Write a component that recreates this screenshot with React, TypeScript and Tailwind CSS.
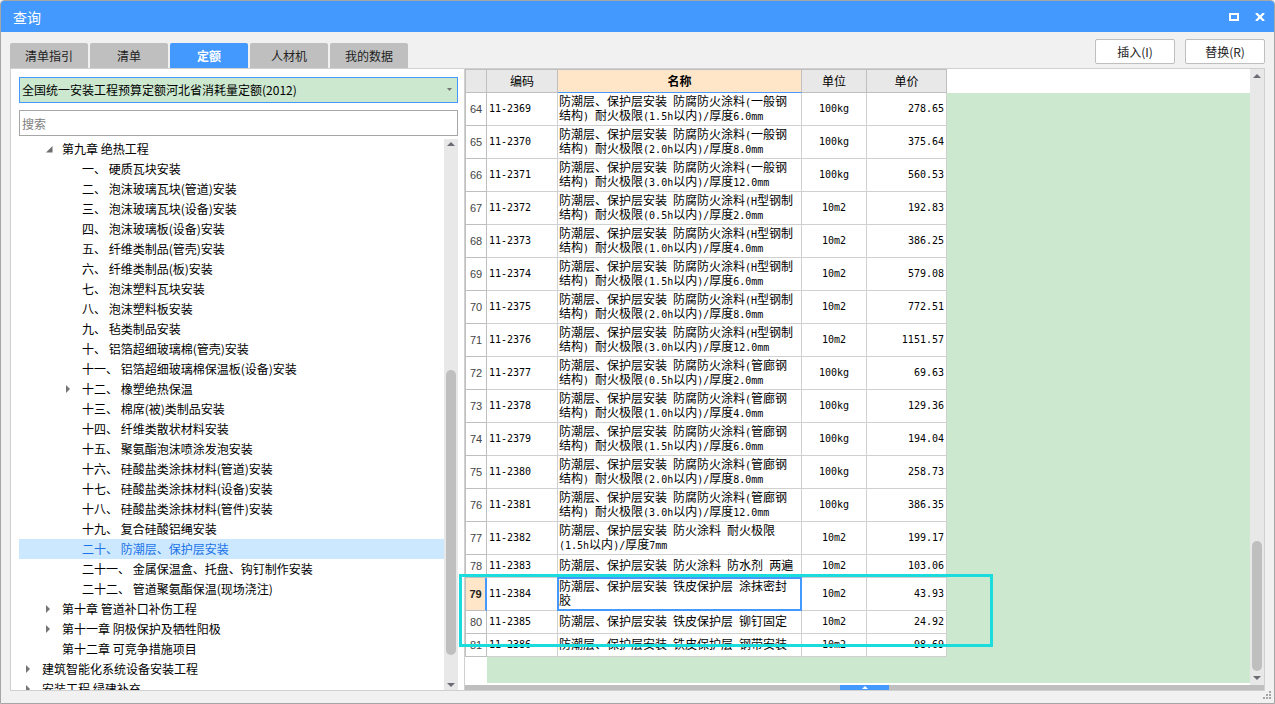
import React, { useState } from 'react';
import clsx from 'clsx';

interface TreeNode {
  label: string;
  level: number;
  arrow?: 'open' | 'closed';
}

interface QuotaRow {
  no: number;
  code: string;
  name: string[];
  unit: string;
  price: string;
  short?: boolean;
}

const TABS = ['清单指引', '清单', '定额', '人材机', '我的数据'];

const TREE: TreeNode[] = [
  { label: '第九章 绝热工程', level: 1, arrow: 'open' },
  { label: '一、 硬质瓦块安装', level: 2 },
  { label: '二、 泡沫玻璃瓦块(管道)安装', level: 2 },
  { label: '三、 泡沫玻璃瓦块(设备)安装', level: 2 },
  { label: '四、 泡沫玻璃板(设备)安装', level: 2 },
  { label: '五、 纤维类制品(管壳)安装', level: 2 },
  { label: '六、 纤维类制品(板)安装', level: 2 },
  { label: '七、 泡沫塑料瓦块安装', level: 2 },
  { label: '八、 泡沫塑料板安装', level: 2 },
  { label: '九、 毡类制品安装', level: 2 },
  { label: '十、 铝箔超细玻璃棉(管壳)安装', level: 2 },
  { label: '十一、 铝箔超细玻璃棉保温板(设备)安装', level: 2 },
  { label: '十二、 橡塑绝热保温', level: 2, arrow: 'closed' },
  { label: '十三、 棉席(被)类制品安装', level: 2 },
  { label: '十四、 纤维类散状材料安装', level: 2 },
  { label: '十五、 聚氨酯泡沫喷涂发泡安装', level: 2 },
  { label: '十六、 硅酸盐类涂抹材料(管道)安装', level: 2 },
  { label: '十七、 硅酸盐类涂抹材料(设备)安装', level: 2 },
  { label: '十八、 硅酸盐类涂抹材料(管件)安装', level: 2 },
  { label: '十九、 复合硅酸铝绳安装', level: 2 },
  { label: '二十、 防潮层、保护层安装', level: 2 },
  { label: '二十一、 金属保温盒、托盘、钩钉制作安装', level: 2 },
  { label: '二十二、 管道聚氨酯保温(现场浇注)', level: 2 },
  { label: '第十章 管道补口补伤工程', level: 1, arrow: 'closed' },
  { label: '第十一章 阴极保护及牺牲阳极', level: 1, arrow: 'closed' },
  { label: '第十二章 可竞争措施项目', level: 1 },
  { label: '建筑智能化系统设备安装工程', level: 0, arrow: 'closed' },
  { label: '安装工程 绿建补充', level: 0, arrow: 'closed' },
];

const ROWS: QuotaRow[] = [
  { no: 64, code: '11-2369', name: ['防潮层、保护层安装 防腐防火涂料(一般钢', '结构) 耐火极限(1.5h以内)/厚度6.0mm'], unit: '100kg', price: '278.65' },
  { no: 65, code: '11-2370', name: ['防潮层、保护层安装 防腐防火涂料(一般钢', '结构) 耐火极限(2.0h以内)/厚度8.0mm'], unit: '100kg', price: '375.64' },
  { no: 66, code: '11-2371', name: ['防潮层、保护层安装 防腐防火涂料(一般钢', '结构) 耐火极限(3.0h以内)/厚度12.0mm'], unit: '100kg', price: '560.53' },
  { no: 67, code: '11-2372', name: ['防潮层、保护层安装 防腐防火涂料(H型钢制', '结构) 耐火极限(0.5h以内)/厚度2.0mm'], unit: '10m2', price: '192.83' },
  { no: 68, code: '11-2373', name: ['防潮层、保护层安装 防腐防火涂料(H型钢制', '结构) 耐火极限(1.0h以内)/厚度4.0mm'], unit: '10m2', price: '386.25' },
  { no: 69, code: '11-2374', name: ['防潮层、保护层安装 防腐防火涂料(H型钢制', '结构) 耐火极限(1.5h以内)/厚度6.0mm'], unit: '10m2', price: '579.08' },
  { no: 70, code: '11-2375', name: ['防潮层、保护层安装 防腐防火涂料(H型钢制', '结构) 耐火极限(2.0h以内)/厚度8.0mm'], unit: '10m2', price: '772.51' },
  { no: 71, code: '11-2376', name: ['防潮层、保护层安装 防腐防火涂料(H型钢制', '结构) 耐火极限(3.0h以内)/厚度12.0mm'], unit: '10m2', price: '1151.57' },
  { no: 72, code: '11-2377', name: ['防潮层、保护层安装 防腐防火涂料(管廊钢', '结构) 耐火极限(0.5h以内)/厚度2.0mm'], unit: '100kg', price: '69.63' },
  { no: 73, code: '11-2378', name: ['防潮层、保护层安装 防腐防火涂料(管廊钢', '结构) 耐火极限(1.0h以内)/厚度4.0mm'], unit: '100kg', price: '129.36' },
  { no: 74, code: '11-2379', name: ['防潮层、保护层安装 防腐防火涂料(管廊钢', '结构) 耐火极限(1.5h以内)/厚度6.0mm'], unit: '100kg', price: '194.04' },
  { no: 75, code: '11-2380', name: ['防潮层、保护层安装 防腐防火涂料(管廊钢', '结构) 耐火极限(2.0h以内)/厚度8.0mm'], unit: '100kg', price: '258.73' },
  { no: 76, code: '11-2381', name: ['防潮层、保护层安装 防腐防火涂料(管廊钢', '结构) 耐火极限(3.0h以内)/厚度12.0mm'], unit: '100kg', price: '386.35' },
  { no: 77, code: '11-2382', name: ['防潮层、保护层安装 防火涂料 耐火极限', '(1.5h以内)/厚度7mm'], unit: '10m2', price: '199.17' },
  { no: 78, code: '11-2383', name: ['防潮层、保护层安装 防火涂料 防水剂 两遍'], unit: '10m2', price: '103.06', short: true },
  { no: 79, code: '11-2384', name: ['防潮层、保护层安装 铁皮保护层 涂抹密封', '胶'], unit: '10m2', price: '43.93' },
  { no: 80, code: '11-2385', name: ['防潮层、保护层安装 铁皮保护层 铆钉固定'], unit: '10m2', price: '24.92', short: true },
  { no: 81, code: '11-2386', name: ['防潮层、保护层安装 铁皮保护层 钢带安装'], unit: '10m2', price: '98.69', short: true },
];

const INDENT = ['pl-[7px]', 'pl-[27px]', 'pl-[47px]'];

const MONO = "font-['DejaVu_Sans_Mono',monospace] text-[10px]";

// Half-width runs are set in the mono face so that two of them fill one CJK cell
const MixedLine: React.FC<{ text: string }> = ({ text }) => (
  <div className="whitespace-nowrap">
    {text.split(/([\x20-\x7e]+)/).map((part, i) =>
      i % 2 ? (
        <span key={i} className={clsx(MONO, 'leading-none')}>{part}</span>
      ) : (
        part
      )
    )}
  </div>
);

const TreeArrow: React.FC<{ kind?: 'open' | 'closed' }> = ({ kind }) => (
  <span className="w-4 shrink-0 flex items-center">
    {kind === 'open' && (
      <svg width="7" height="7" viewBox="0 0 7 7" className="fill-[#6e6e6e]">
        <path d="M6.5 0v6.5H0z" />
      </svg>
    )}
    {kind === 'closed' && (
      <svg width="4" height="8" viewBox="0 0 4 8" className="fill-[#757575]">
        <path d="M0 0l4 4-4 4z" />
      </svg>
    )}
  </span>
);

interface ScrollBarProps {
  arrow: string;
  before: string;
  thumb: string;
}

const ScrollBar: React.FC<ScrollBarProps> = ({ arrow, before, thumb }) => (
  <div className="w-3.5 shrink-0 bg-[#e8e8e8] flex flex-col items-center">
    <svg width="8" height="4" viewBox="0 0 8 4" className={clsx('shrink-0 fill-[#6b6b76]', arrow)}>
      <path d="M4 0l4 4H0z" />
    </svg>
    <div className={before} />
    <div className={clsx('w-2.5 rounded-full bg-[#bfbfbf]', thumb)} />
    <svg width="8" height="4" viewBox="0 0 8 4" className={clsx('shrink-0 fill-[#6b6b76]', arrow)}>
      <path d="M0 0h8L4 4z" />
    </svg>
  </div>
);

const QuotaTable: React.FC<{ current: number; onPick: (no: number) => void }> = ({ current, onPick }) => {
  const head = 'h-6 border-t border-r border-b border-[#bfbfbf] p-0 font-normal';
  const cell = 'border-r border-b border-[#d0d0d0] py-0';

  return (
    <table className="w-[482px] table-fixed border-separate border-spacing-0 border-l border-[#bfbfbf] bg-white leading-[14px]">
      <colgroup>
        <col className="w-[21px]" />
        <col className="w-[71px]" />
        <col className="w-[244px]" />
        <col className="w-[65px]" />
        <col className="w-[80px]" />
      </colgroup>
      <thead>
        <tr className="bg-[#e8e8e8]">
          <th className={head} aria-label="序号" />
          <th className={head}>编码</th>
          <th className="h-6 border-t border-r border-b border-t-[#bfbfbf] border-r-[#bfbfbf] border-b-[#4499ff] bg-[#ffe6c8] p-0 font-bold">名称</th>
          <th className={head}>单位</th>
          <th className={head}>单价</th>
        </tr>
      </thead>
      <tbody className="font-['Liberation_Sans','Noto_Sans_CJK_SC',sans-serif]">
        {ROWS.map((row) => {
          const active = row.no === current;
          return (
            <tr key={row.no} className={row.short ? 'h-[23px]' : 'h-[33px]'} onClick={() => onPick(row.no)}>
              <td
                className={clsx(
                  'border-b border-b-[#bfbfbf] p-0 text-center text-[11px]',
                  active ? 'border-r-2 border-r-[#4499ff] bg-[#ffe6c8] font-bold text-[#222]' : 'border-r border-r-[#bfbfbf] text-[#444]'
                )}
              >
                {row.no}
              </td>
              <td className={clsx(cell, MONO, 'px-0.5')}>{row.code}</td>
              <td className={clsx(cell, 'relative px-px')}>
                {row.name.map((line) => (
                  <MixedLine key={line} text={line} />
                ))}
                {active && <span className="absolute -inset-px border-2 border-[#4499ff]" />}
              </td>
              <td className={clsx(cell, MONO, 'px-0.5 text-center')}>{row.unit}</td>
              <td className={clsx(cell, MONO, 'px-0.5 text-right')}>{row.price}</td>
            </tr>
          );
        })}
      </tbody>
    </table>
  );
};

export default function App() {
  const [tab, setTab] = useState('定额');
  const [node, setNode] = useState('二十、 防潮层、保护层安装');
  const [current, setCurrent] = useState(79);

  return (
    <div className="relative h-screen flex flex-col overflow-hidden rounded-t-[4px] border border-[#a6a6a6] bg-[#f1f1f1] font-['Noto_Sans_CJK_SC',sans-serif] text-xs text-black">
      {/* Title bar */}
      <header className="h-[31px] shrink-0 flex items-center justify-between bg-[#4499ff] pl-3 pr-[9px] text-white">
        <h1 className="text-sm">查询</h1>
        <div className="flex items-center gap-4">
          <button type="button" aria-label="最大化">
            <svg width="10" height="8" viewBox="0 0 10 8" className="block">
              <path d="M1 1h8v6H1z" fill="none" stroke="#fff" strokeWidth="2" />
            </svg>
          </button>
          <button type="button" aria-label="关闭">
            <svg width="10" height="8" viewBox="0 0 10 8" className="block">
              <path d="M1 0l8 8M9 0L1 8" fill="none" stroke="#fff" strokeWidth="2.2" />
            </svg>
          </button>
        </div>
      </header>

      {/* Tabs and actions */}
      <div className="h-9 shrink-0 flex items-end justify-between px-[9px]">
        <div className="flex gap-0.5">
          {TABS.map((name) => (
            <button
              key={name}
              type="button"
              onClick={() => setTab(name)}
              className={clsx(
                'h-[25px] w-[78px] rounded-t-[2px]',
                name === tab ? 'bg-[#4499ff] font-bold text-white' : 'bg-[#bfbfbf] text-[#222]'
              )}
            >
              {name}
            </button>
          ))}
        </div>
        <div className="flex gap-2.5 pb-1">
          <button type="button" className="h-[25px] w-20 rounded-[2px] border border-[#bfbfbf] bg-white text-[#222]">插入(I)</button>
          <button type="button" className="h-[25px] w-20 rounded-[2px] border border-[#bfbfbf] bg-white text-[#222]">替换(R)</button>
        </div>
      </div>

      <main className="mx-[9px] mb-3 flex min-h-0 flex-1 border border-[#d0d0d0] bg-white">
        {/* Chapter tree */}
        <section className="w-[453px] shrink-0 flex flex-col pl-2 pr-1.5 pt-2">
          <div className="relative">
            <select
              aria-label="定额库"
              className="block h-[26px] w-full appearance-none border border-[#4499ff] bg-[#cce8cf] px-0.5 outline-none"
            >
              <option>全国统一安装工程预算定额河北省消耗量定额(2012)</option>
            </select>
            <svg width="5" height="3" viewBox="0 0 5 3" className="pointer-events-none absolute right-1.5 top-[11px] fill-[#757575]">
              <path d="M0 0h5L2.5 3z" />
            </svg>
          </div>
          <input
            type="text"
            aria-label="搜索"
            placeholder="搜索"
            className="mt-[7px] h-[26px] w-full border border-[#a6a6a6] bg-white px-0.5 outline-none placeholder:text-[#808080]"
          />
          <div className="mt-[3px] flex min-h-0 flex-1">
            <ul className="min-w-0 flex-1 overflow-hidden">
              {TREE.map((item) => (
                <li key={item.label}>
                  <button
                    type="button"
                    onClick={() => setNode(item.label)}
                    className={clsx(
                      'flex h-5 w-full items-center whitespace-nowrap text-left',
                      INDENT[item.level],
                      item.label === node && 'bg-[#cce8ff] text-[#1a73e8]'
                    )}
                  >
                    <TreeArrow kind={item.arrow} />
                    {item.label}
                  </button>
                </li>
              ))}
            </ul>
            <ScrollBar arrow="my-[3px]" before="grow-[221]" thumb="grow-[285] mb-[25px]" />
          </div>
        </section>

        {/* Quota list */}
        <section className="flex min-w-0 flex-1 flex-col border-l border-[#d0d0d0]">
          <div className="flex min-h-0 flex-1">
            <div className="flex min-w-0 flex-1 pb-0.5">
              <div className="relative flex flex-col">
                <QuotaTable current={current} onPick={setCurrent} />
                <div className="flex flex-1">
                  <div className="w-[22px]" />
                  <div className="flex-1 bg-[#cce8cf]" />
                </div>
                {/* Highlight frame round the picked rows */}
                <div className="pointer-events-none absolute -left-1.5 -right-[46px] bottom-9 h-[73px] border-[3px] border-[#1adcdc]" />
              </div>
              <div className="flex-1 pt-6">
                <div className="h-full bg-[#cce8cf]" />
              </div>
            </div>
            <ScrollBar arrow="my-[5px]" before="grow-[458]" thumb="grow-[130]" />
          </div>
          <div className="flex h-[5px] shrink-0 justify-center bg-[#bfbfbf]">
            <button type="button" aria-label="展开" className="flex h-[5px] w-[49px] items-center justify-center bg-[#4499ff]">
              <svg width="6" height="3" viewBox="0 0 6 3" className="fill-white">
                <path d="M3 0l3 3H0z" />
              </svg>
            </button>
          </div>
        </section>
      </main>

      {/* Resize grip */}
      <svg width="8" height="8" viewBox="0 0 8 8" className="absolute bottom-1 right-[3px] fill-[#a6a6a6]">
        <path d="M6 0h2v2H6zM3 3h2v2H3zM6 3h2v2H6zM0 6h2v2H0zM3 6h2v2H3zM6 6h2v2H6z" />
      </svg>
    </div>
  );
}
